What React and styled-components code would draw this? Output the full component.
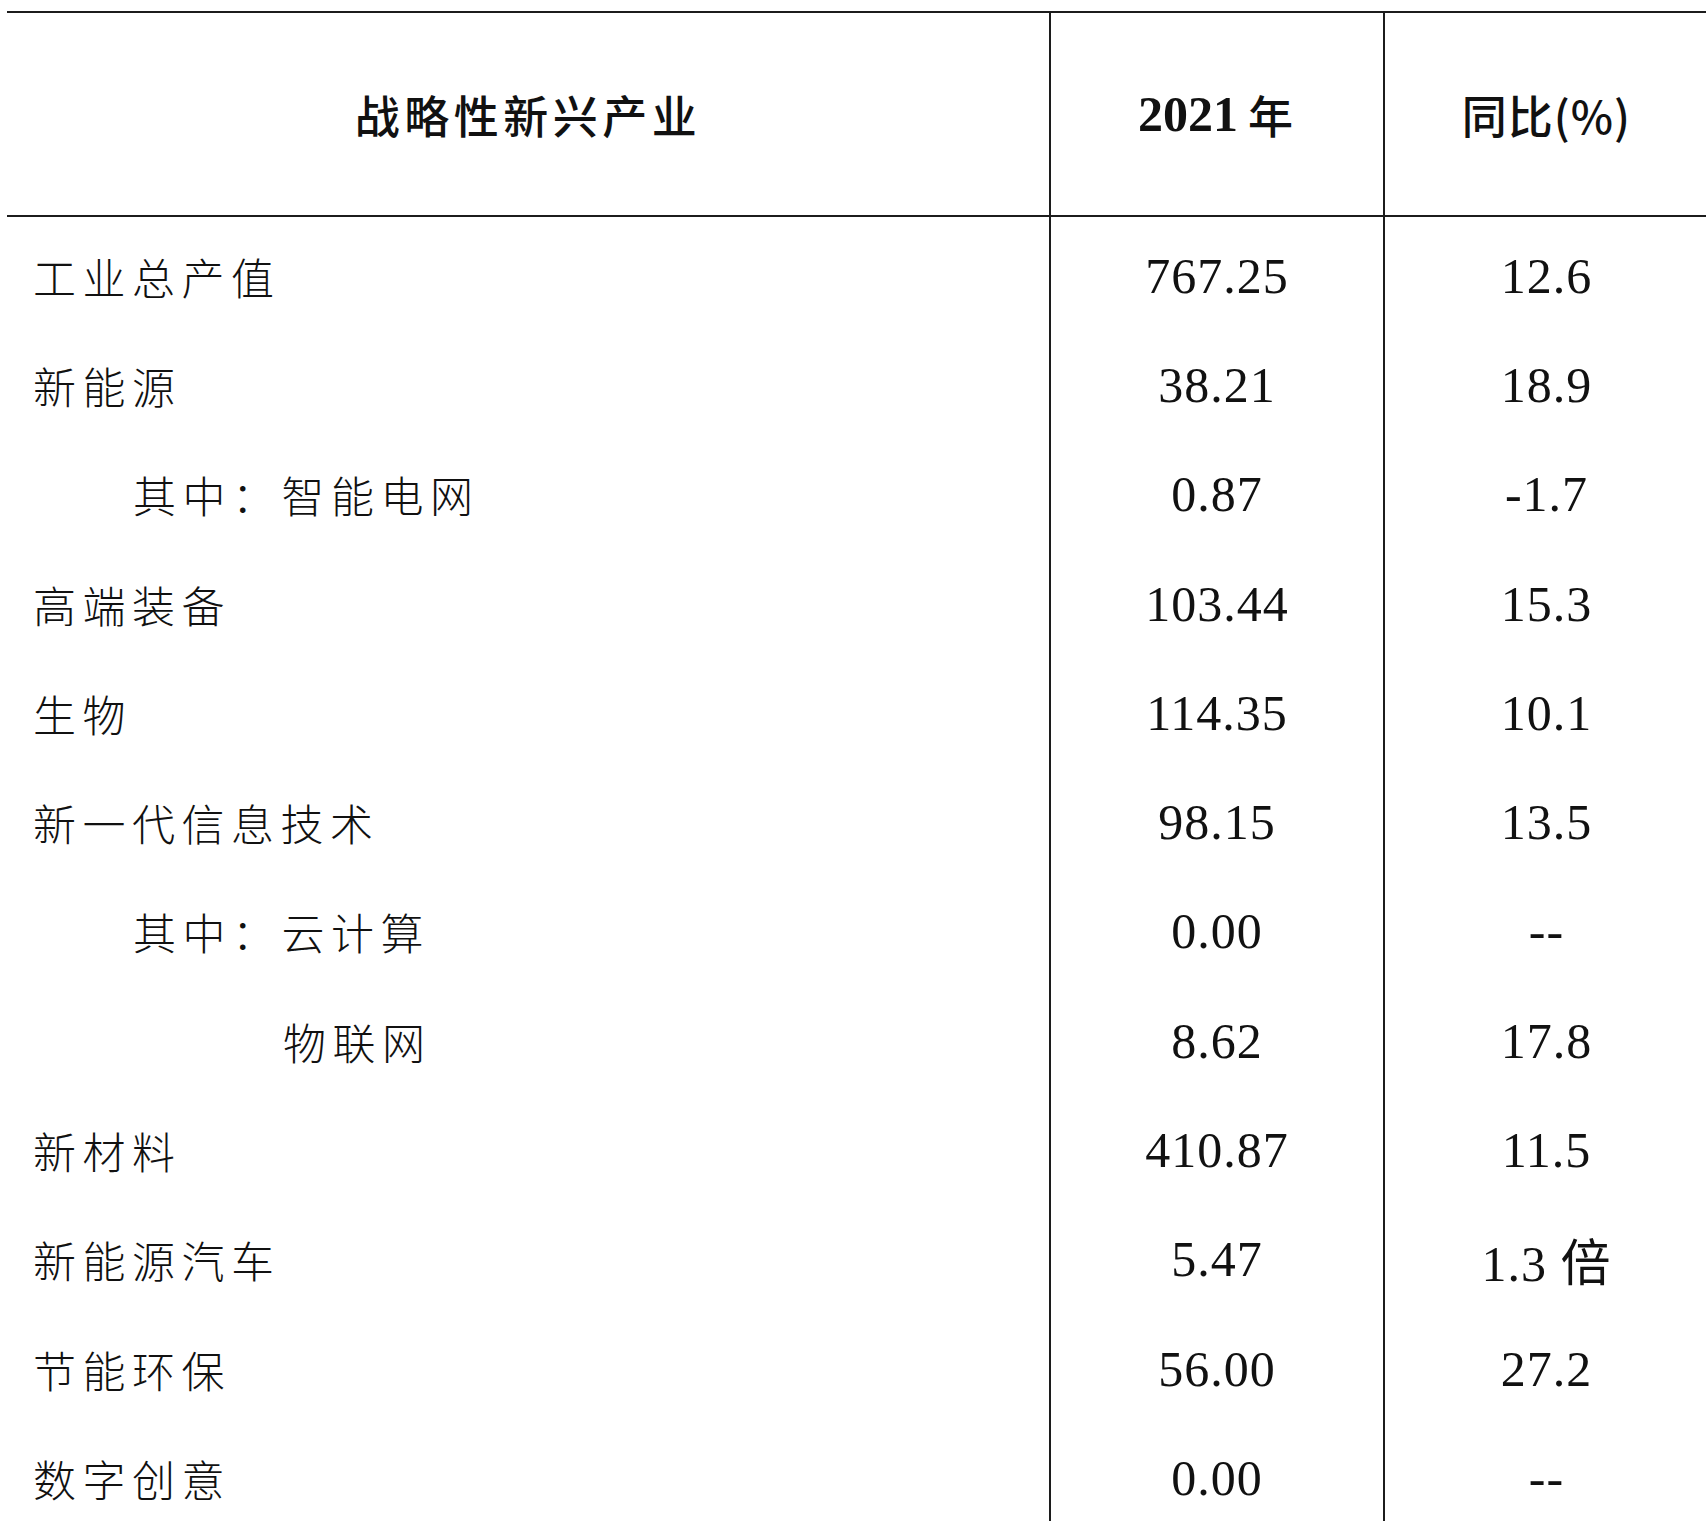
import React from "react";
import styled, { createGlobalStyle } from "styled-components";

const GlobalStyle = createGlobalStyle`
  html, body {
    margin: 0;
    padding: 0;
    background: #ffffff;
    overflow: hidden;
  }
  body {
    font-family: "Noto Sans CJK SC", sans-serif;
    color: #111111;
  }
`;

const rows = [
  { name: "工业总产值", value: "767.25", change: "12.6" },
  { name: "新能源", value: "38.21", change: "18.9" },
  { name: "其中：智能电网", value: "0.87", change: "-1.7", indent: 1 },
  { name: "高端装备", value: "103.44", change: "15.3" },
  { name: "生物", value: "114.35", change: "10.1" },
  { name: "新一代信息技术", value: "98.15", change: "13.5" },
  { name: "其中：云计算", value: "0.00", change: "--", indent: 1 },
  { name: "物联网", value: "8.62", change: "17.8", indent: 2 },
  { name: "新材料", value: "410.87", change: "11.5" },
  { name: "新能源汽车", value: "5.47", change: "1.3 倍" },
  { name: "节能环保", value: "56.00", change: "27.2" },
  { name: "数字创意", value: "0.00", change: "--" },
];

const indents = [0, 100, 250];

export default function App() {
  return (
    <Page>
      <GlobalStyle />
      <Table>
        <HeadCell $spacing={4.5}>战略性新兴产业</HeadCell>
        <HeadCell $divider>
          <Year>2021</Year> 年
        </HeadCell>
        <HeadCell $divider $spacing={1}>
          同比(%)
        </HeadCell>
        {rows.map((row) => (
          <React.Fragment key={row.name}>
            <LabelCell $indent={indents[row.indent || 0]}>{row.name}</LabelCell>
            <NumberCell $divider>{row.value}</NumberCell>
            <NumberCell $divider>{row.change}</NumberCell>
          </React.Fragment>
        ))}
      </Table>
    </Page>
  );
}

const Page = styled.div`
  width: 1701px;
  padding-left: 7px;
  padding-top: 11px;
`;

const Table = styled.div`
  display: grid;
  grid-template-columns: 1042px 334px 325px;
  grid-template-rows: 204px;
  grid-auto-rows: 109.3px;
  border-top: 2px solid #1c1c1c;
`;

const HeadCell = styled.div`
  display: flex;
  align-items: center;
  justify-content: center;
  border-bottom: 2px solid #1c1c1c;
  border-left: ${(p) => (p.$divider ? "2px solid #1c1c1c" : "none")};
  font-family: "Noto Sans CJK SC", sans-serif;
  font-size: 45px;
  font-weight: 500;
  letter-spacing: ${(p) => p.$spacing ?? 3}px;
  color: #111;
`;

const Year = styled.span`
  font-family: "Liberation Serif", serif;
  font-size: 50px;
  font-weight: 700;
  letter-spacing: 0;
  margin-right: 10px;
`;

const LabelCell = styled.div`
  display: flex;
  align-items: center;
  padding-top: 8px;
  padding-left: ${(p) => 26 + p.$indent}px;
  font-family: "Noto Sans CJK SC", sans-serif;
  font-size: 43px;
  font-weight: 300;
  letter-spacing: 6.5px;
  color: #111;
`;

const NumberCell = styled.div`
  display: flex;
  align-items: center;
  justify-content: center;
  padding-top: 8px;
  border-left: ${(p) => (p.$divider ? "2px solid #1c1c1c" : "none")};
  font-family: "Liberation Serif", "Noto Sans CJK SC", serif;
  font-size: 50px;
  letter-spacing: 1px;
  color: #111;
`;
